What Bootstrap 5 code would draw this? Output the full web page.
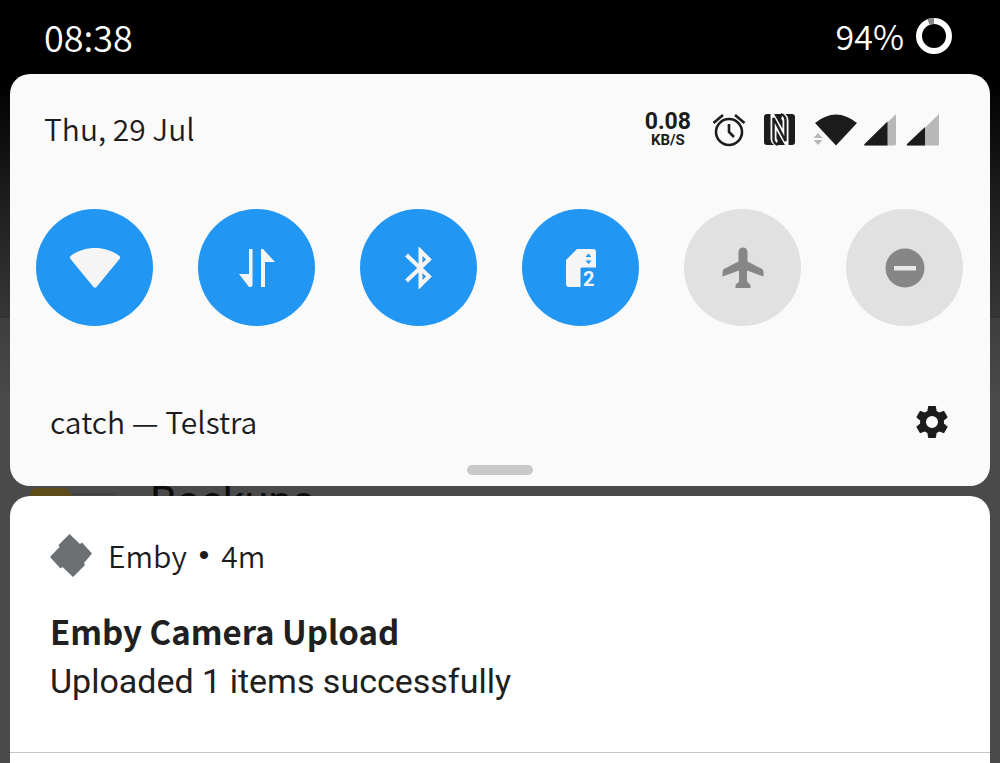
<!DOCTYPE html>
<html lang="en">
<head>
<meta charset="utf-8">
<meta name="viewport" content="width=device-width, initial-scale=1">
<title>Notification shade</title>
<link href="https://cdn.jsdelivr.net/npm/bootstrap@5.3.0/dist/css/bootstrap.min.css" rel="stylesheet">
<style>
  body {
    font-family: "Noto Sans CJK SC", "Noto Sans", sans-serif;
    font-size: 30px;
    line-height: 40px;
    color: #1c1c1c;
    background: linear-gradient(#000 0, #000 80px, #1c1c1c 195px, #363636 316px, #303030 316px, #303030 317px, #3e3e3e 318px, #4a4a4a 400px, #4a4a4a 100%) no-repeat #4a4a4a;
  }
  svg { display: block; flex: none; }
  .thin { font-weight: 350; }
  .status-bar { height: 74px; padding: 0 48px 2px 44px; font-size: 34px; color: #fff; background: #000; }
  .clock { font-size: 36px; }
  .panel { background: #fafafa; border-radius: 20px; margin: 0 10px; }
  .panel-head { padding: 34px 50px 0 34px; }
  .speed { font-family: Roboto, sans-serif; font-weight: 700; font-size: 23px; line-height: 21px; text-align: center; padding-top: 2px; }
  .speed-unit { font-size: 15px; line-height: 16px; }
  .tiles { padding: 61px 27px 0 26px; }
  .tile { width: 117px; height: 117px; border: 0; border-radius: 50%; background: #e1e1e1; color: #868686; padding: 0; display: flex; align-items: center; justify-content: center; }
  .tile.is-on { background: #2196f3; color: #f5f5f5; }
  .panel-foot { padding: 75px 40px 0; }
  .tool { border: 0; padding: 2px 0 0; background: none; color: #1c1c1c; }
  .handle { width: 66px; height: 10px; border-radius: 5px; background: #c8c8c8; margin: 24px auto 11px; }
  .behind { height: 10px; padding-left: 28px; font-family: Roboto, sans-serif; font-size: 43px; line-height: 44px; color: #0c0c0c; }
  .folder-name { margin-left: 34px; margin-top: -7px; }
  .notices { background: #fff; border-radius: 20px 20px 0 0; margin: 0 10px; }
  .notice { padding: 37px 40px 47px; border-bottom: 1px solid #c4c4c4; }
  .source { gap: 12px; }
  .dot { font-family: "Liberation Sans", sans-serif; }
  .notice-title { font-size: 33px; line-height: 48px; font-weight: 700; margin: 30px 0 0; color: #202020; }
  .notice-text { font-family: Roboto, sans-serif; font-size: 34px; line-height: 48px; margin: 0; padding-top: 2px; color: #202020; }
</style>
</head>
<body>
<div class="d-flex flex-column min-vh-100">
  <header class="status-bar thin d-flex align-items-center justify-content-between">
    <time class="clock">08:38</time>
    <div class="d-flex align-items-center gap-2">
      <span>94%</span>
      <svg width="40" height="38" viewBox="4 0 40 38" fill="none" stroke-width="6" aria-hidden="true">
        <circle cx="26" cy="19" r="15" stroke="#fff"/>
        <path d="M20.500 5.050A15 15 0 0 1 26 4" stroke="#888"/>
      </svg>
    </div>
  </header>

  <section class="panel d-flex flex-column">
    <div class="panel-head thin d-flex align-items-center justify-content-between">
      <span>Thu, 29 Jul</span>
      <div class="d-flex align-items-center">
        <div class="speed"><div>0.08</div><div class="speed-unit">KB/S</div></div>
        <svg class="ms-3" width="233" height="40" viewBox="702 108 233 40" aria-hidden="true">
          <g fill="none" stroke="#1c1c1c" stroke-width="2.600">
            <circle cx="724" cy="132" r="13"/>
            <path d="M724 124v8l5 5M708.500 123l9.500-8M739.500 123l-9.500-8"/>
          </g>
          <rect x="759" y="114" width="31" height="31" rx="3" fill="#1c1c1c"/>
          <path d="M772 143q-3.500-1-3.500-5v-19L780.500 140v-19q0-4-3.500-5" fill="none" stroke="#fafafa" stroke-width="6"/>
          <path d="M773 145q-4.500-2-4.500-6v-21L780.500 141v-21q0-4-4.500-6" fill="none" stroke="#1c1c1c" stroke-width="2.400"/>
          <path d="M810 123Q831 106 852 123L831 145.500z" fill="#1c1c1c"/>
          <path d="M808.500 138l4.500-5 4.500 5zM808.500 140l4.500 5 4.500-5z" fill="#b8b8b8"/>
          <path d="M859 145.500L891 114v30q0 1.500-1.500 1.500zM902 145.500L934 114v31.500z" fill="#b8b8b8"/>
          <path d="M882.500 121.500v24h-22q-2 0-1-1.500zM920 127v18.500h-17q-2 0-1-1.500z" fill="#1c1c1c"/>
        </svg>
      </div>
    </div>

    <div class="tiles d-flex justify-content-between">
      <button type="button" class="tile is-on" aria-label="Wi-Fi">
        <svg width="52" height="42" viewBox="0 0 52 42" fill="currentColor"><path d="M1.500 12Q0 10 2 8.700C16-1.500 36-1.500 50 8.700q2 1.300.500 3.300L27.500 40q-1.500 1.500-3 0z"/></svg>
      </button>
      <button type="button" class="tile is-on" aria-label="Mobile data">
        <svg width="36" height="38" viewBox="0 0 36 38" fill="currentColor"><path d="M10 0h3.500v36q0 2-2 2h-1.500L0 25h10zM22 0h2l12 13H26v25h-4z"/></svg>
      </button>
      <button type="button" class="tile is-on" aria-label="Bluetooth">
        <svg width="28" height="42" viewBox="0 0 28 42" fill="none" stroke="currentColor" stroke-width="4"><path d="M1.500 8l22.500 21.500-8.500 8.500V4l8.500 8.500L1.500 34"/></svg>
      </button>
      <button type="button" class="tile is-on" aria-label="SIM 2">
        <svg width="34" height="46" viewBox="-1 -4 34 46" fill="currentColor"><path fill-rule="evenodd" d="M12 0h16q3 0 3 3v15.500H17q-1.500 0-1.500 1.500v18H4q-3 0-3-3V11zM20.500 8h6L23.500 4.500zM20.500 11.500l3 3.500 3-3.500z"/><text x="18" y="37" font-family="Roboto, sans-serif" font-weight="700" font-size="20">2</text></svg>
      </button>
      <button type="button" class="tile" aria-label="Airplane mode">
        <svg width="42" height="42" viewBox="0 0 42 42" fill="currentColor"><path d="M16.500 5a4.500 4.500 0 0 1 9 0v9.500L40 22q1.500 1 1.500 3v4.500L25 23.500v11l3.500 3.500v3h-15v-3L17 34.500v-11L.500 29.500V25q0-2 1.500-3l14.500-7.500z"/></svg>
      </button>
      <button type="button" class="tile" aria-label="Do not disturb">
        <svg width="40" height="40" viewBox="0 0 40 40"><circle cx="20" cy="20" r="19.500" fill="currentColor"/><path d="M9 18h22v4.500H9z" fill="#e8e8e8"/></svg>
      </button>
    </div>

    <div class="panel-foot thin d-flex align-items-center justify-content-between">
      <span>catch — Telstra</span>
      <button type="button" class="tool" aria-label="Settings">
        <svg width="36" height="36" viewBox="1.200 1.200 21.600 21.600" fill="currentColor"><path d="M19.140 12.940c.040-.300.060-.610.060-.940s-.020-.640-.070-.940l2.030-1.580a.490.490 0 0 0 .120-.610l-1.920-3.320a.490.490 0 0 0-.590-.220l-2.390.960a7 7 0 0 0-1.620-.940L14.400 2.810a.480.480 0 0 0-.480-.410h-3.840a.470.470 0 0 0-.470.410L9.250 5.350a7 7 0 0 0-1.620.940l-2.390-.960a.480.480 0 0 0-.590.220L2.740 8.870a.470.470 0 0 0 .120.610l2.030 1.580a6 6 0 0 0 0 1.880l-2.030 1.580a.490.490 0 0 0-.120.610l1.920 3.320c.120.220.370.290.590.220l2.390-.960a7 7 0 0 0 1.620.940l.360 2.540c.050.240.240.410.480.410h3.840c.240 0 .440-.170.470-.410l.360-2.540a7 7 0 0 0 1.620-.940l2.390.960c.220.080.470 0 .590-.220l1.920-3.320a.470.470 0 0 0-.120-.610zM12 15.600a3.600 3.600 0 1 1 0-7.200 3.600 3.600 0 0 1 0 7.200z"/></svg>
      </button>
    </div>
    <div class="handle"></div>
  </section>

  <div class="behind d-flex align-items-start overflow-hidden" aria-hidden="true">
    <svg width="88" height="10" viewBox="0 0 88 10"><path d="M44 7h43v2H44z" fill="#404040"/><path d="M2 10q0-8 7-8h27q4 0 8 8z" fill="#5e4c18"/></svg>
    <span class="folder-name">Backups</span>
  </div>

  <main class="notices flex-grow-1">
    <article class="notice">
      <div class="thin d-flex align-items-center">
        <svg class="me-3" width="42" height="44" viewBox="0 -1 42 44" fill="#6d7073" aria-hidden="true"><path d="M19.500 0L30 10l2-1.500L42 19.500 34 29l1 2-12 12-10.500-10-2 1.500L0 23 9.500 13l-1-2z"/></svg>
        <div class="source d-flex align-items-center"><span>Emby</span><span class="dot">•</span><span>4m</span></div>
      </div>
      <h1 class="notice-title">Emby Camera Upload</h1>
      <p class="notice-text">Uploaded 1 items successfully</p>
    </article>
  </main>
</div>
<script src="https://cdn.jsdelivr.net/npm/bootstrap@5.3.0/dist/js/bootstrap.bundle.min.js"></script>
</body>
</html>
